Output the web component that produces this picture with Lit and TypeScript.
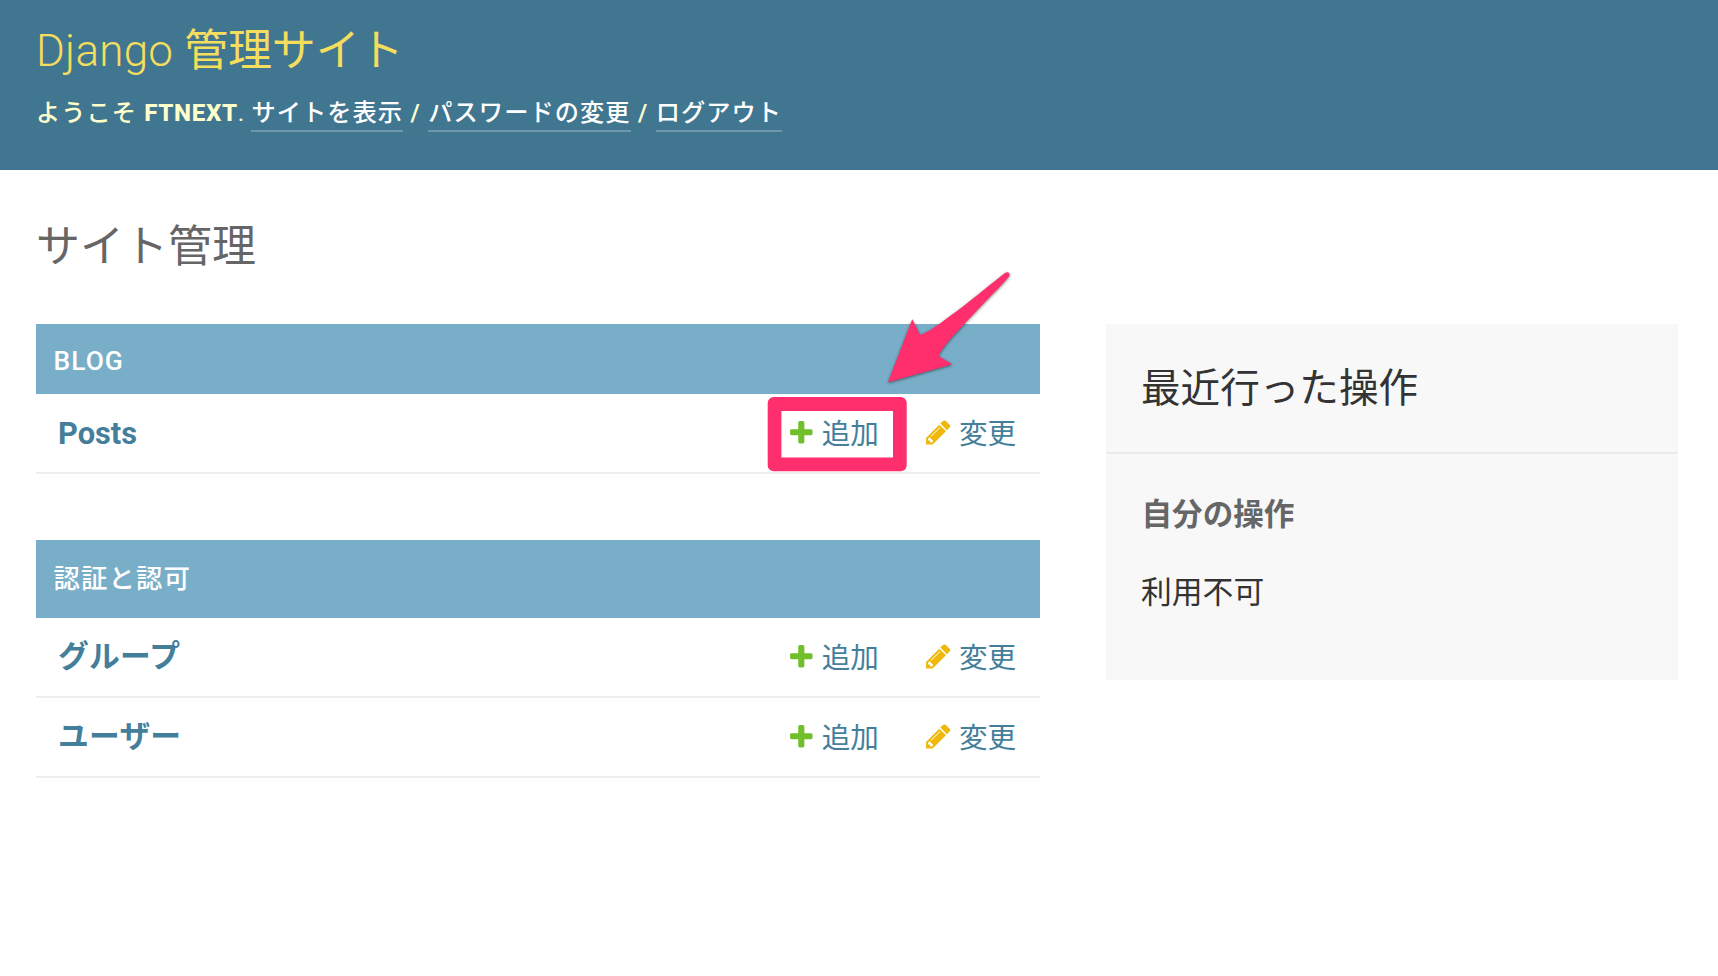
import { LitElement, html, css, svg } from "lit";
import { customElement, property } from "lit/decorators.js";

const PLUS =
  "M1600 796v192q0 40-28 68t-68 28h-416v416q0 40-28 68t-68 28h-192q-40 0-68-28t-28-68v-416h-416q-40 0-68-28t-28-68v-192q0-40 28-68t68-28h416v-416q0-40 28-68t68-28h192q40 0 68 28t28 68v416h416q40 0 68 28t28 68z";
const PENCIL =
  "M491 1536l91-91-235-235-91 91v107h128v128h107zm523-928q0-22-22-22-10 0-17 7l-542 542q-7 7-7 17 0 22 22 22 10 0 17-7l542-542q7-7 7-17zm-54-192l416 416-832 832h-416v-416zm683 96q0 53-37 90l-166 166-416-416 166-165q36-38 90-38 53 0 91 38l235 234q37 39 37 91z";

interface AppGroup {
  caption: string;
  tall: boolean;
  models: string[];
}

const GROUPS: AppGroup[] = [
  { caption: "BLOG", tall: false, models: ["Posts"] },
  { caption: "認証と認可", tall: true, models: ["グループ", "ユーザー"] },
];

@customElement("action-link")
class ActionLink extends LitElement {
  @property() kind = "add";

  static styles = css`
    :host {
      display: flex;
      align-items: center;
      gap: 6.2px;
      color: #447e9b;
      font-size: 28.6px;
      line-height: 40px;
    }
    .icon {
      width: 28.6px;
      height: 28.6px;
      flex: none;
      margin-bottom: 1px;
    }
    .label {
      padding-top: 1px;
    }
    .add {
      fill: #70bf2b;
    }
    .change {
      fill: #efb80b;
    }
  `;

  render() {
    const add = this.kind === "add";
    return html`<svg class="icon ${this.kind}" viewBox="0 0 1792 1792">
        ${svg`<path d=${add ? PLUS : PENCIL}></path>`}</svg
      ><span class="label">${add ? "追加" : "変更"}</span>`;
  }
}

@customElement("app-module")
class AppModule extends LitElement {
  @property({ attribute: false }) group!: AppGroup;

  static styles = css`
    :host {
      display: block;
    }
    .caption {
      box-sizing: border-box;
      height: 70px;
      padding: 0 17.6px;
      line-height: 74px;
      background: #79aec8;
      color: #fff;
      font-size: 26.4px;
      font-weight: 500;
      letter-spacing: 1px;
    }
    .caption.tall {
      height: 78px;
      line-height: 78px;
      letter-spacing: 1.1px;
    }
    .row {
      box-sizing: border-box;
      height: 80px;
      border-bottom: 2px solid #eee;
      padding: 0 22.4px 0 22px;
      display: grid;
      grid-template-columns: 1fr 137.2px 93.5px;
      align-items: center;
    }
    .name {
      padding-top: 1px;
      color: #447e9b;
      font-size: 30.8px;
      font-weight: 700;
      line-height: 40px;
    }
    .name.kana {
      padding-top: 0;
      letter-spacing: 0.2px;
    }
  `;

  render() {
    return html`
      <div class="caption ${this.group.tall ? "tall" : ""}">${this.group.caption}</div>
      ${this.group.models.map(
        (m) => html`<div class="row">
          <span class="name ${this.group.tall ? "kana" : ""}">${m}</span>
          <action-link kind="add"></action-link>
          <action-link kind="change"></action-link>
        </div>`
      )}
    `;
  }
}

@customElement("app-root")
class AppRoot extends LitElement {
  static styles = css`
    :host {
      display: block;
      position: relative;
      height: 976px;
      overflow: hidden;
      background: #fff;
      color: #333;
      font-family: Roboto, "Noto Sans CJK JP", sans-serif;
    }
    .header {
      box-sizing: border-box;
      height: 170px;
      padding: 23px 36px 0;
      background: #417690;
      color: #ffc;
    }
    .brand {
      margin: 0;
      font-size: 44px;
      font-weight: 400;
      line-height: 56px;
      letter-spacing: -0.2px;
      color: #f5dd5d;
    }
    .latin {
      font-weight: 300;
      letter-spacing: 0.25px;
    }
    .tools {
      margin-top: 16px;
      font-size: 24.2px;
      font-weight: 500;
      line-height: 36px;
      letter-spacing: 1.1px;
      white-space: pre;
    }
    .user {
      font-weight: 800;
      letter-spacing: 0.6px;
    }
    .dot {
      font-weight: 400;
      letter-spacing: 0.7px;
    }
    .slash {
      font-weight: 600;
      letter-spacing: 1.3px;
    }
    .link {
      display: inline-block;
      height: 35px;
      color: #fff;
      border-bottom: 2px solid rgba(255, 255, 255, 0.25);
    }
    .content {
      padding: 49px 40px 0 36px;
    }
    .title {
      margin: 0;
      height: 105px;
      font-size: 44px;
      font-weight: 400;
      line-height: 56px;
      color: #666;
    }
    .columns {
      display: grid;
      grid-template-columns: 1004px 572px;
      column-gap: 66px;
      align-items: start;
    }
    .modules {
      display: flex;
      flex-direction: column;
      gap: 66px;
    }
    .side {
      box-sizing: border-box;
      height: 356px;
      background: #f8f8f8;
    }
    .recent {
      box-sizing: border-box;
      height: 130px;
      margin: 0;
      padding: 0 35px;
      border-bottom: 2px solid #eaeaea;
      font-size: 39.6px;
      font-weight: 400;
      line-height: 129px;
    }
    .mine {
      margin: 0;
      padding: 40px 35.5px 0;
      font-size: 30.6px;
      font-weight: 700;
      line-height: 42px;
      color: #666;
    }
    .none {
      margin: 0;
      padding: 36px 35px 0;
      font-size: 30.8px;
      line-height: 42px;
    }
    .callout {
      position: absolute;
      left: 740px;
      top: 260px;
      width: 320px;
      height: 230px;
      pointer-events: none;
    }
    .arrow {
      filter: drop-shadow(0 1.5px 1.5px rgba(0, 0, 0, 0.5));
    }
  `;

  render() {
    return html`
      <header class="header">
        <h1 class="brand"><span class="latin">Django </span>管理サイト</h1>
        <div class="tools">ようこそ <span class="user">FTNEXT</span><span class="dot">. </span><span class="link">サイトを表示</span><span class="slash"> / </span><span class="link">パスワードの変更</span><span class="slash"> / </span><span class="link">ログアウト</span></div>
      </header>
      <main class="content">
        <h1 class="title">サイト管理</h1>
        <div class="columns">
          <div class="modules">
            ${GROUPS.map((g) => html`<app-module .group=${g}></app-module>`)}
          </div>
          <aside class="side">
            <h2 class="recent">最近行った操作</h2>
            <h3 class="mine">自分の操作</h3>
            <p class="none">利用不可</p>
          </aside>
        </div>
      </main>
      <svg class="callout" viewBox="0 0 320 230">
        <path
          fill="#ff2f6e"
          fill-rule="evenodd"
          d="M33.7 137H160.7a6 6 0 0 1 6 6V205.3a6 6 0 0 1-6 6H33.7a6 6 0 0 1-6-6V143a6 6 0 0 1 6-6zM41.4 151V197.5H153V151z"
        />
        <path
          class="arrow"
          fill="#ff2f6e"
          d="M265.3 12.8C267.8 11 271 13.3 269 16.6C262 25 247 40 228 60C213 76 203 86 198.4 96L212.3 104.3L148 122.3L172.3 59.3L180 74.8C188 73 202 62 217 51C237 36 252 23 265.3 12.8z"
        />
      </svg>
    `;
  }
}
